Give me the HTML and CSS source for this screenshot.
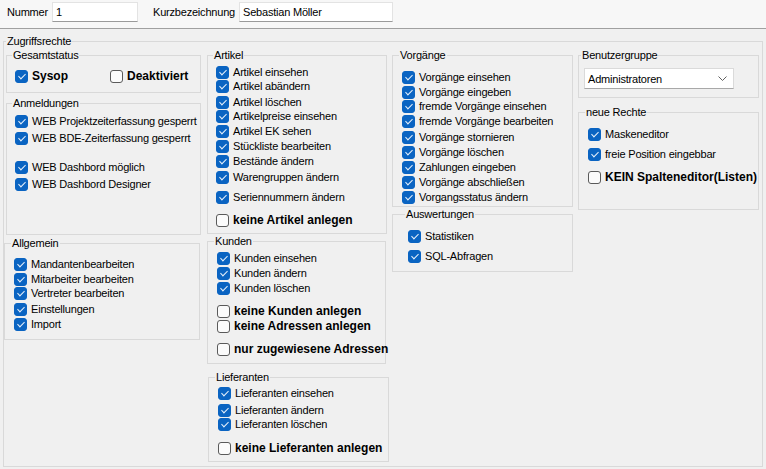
FILE: index.html
```html
<!DOCTYPE html>
<html lang="de">
<head>
<meta charset="utf-8">
<title>Zugriffsrechte</title>
<link rel="stylesheet" href="styles.css">
</head>
<body>
<div class="topbar">
  <span class="top-label num-label">Nummer</span>
  <div class="textbox num-box">1</div>
  <span class="top-label kurz-label">Kurzbezeichnung</span>
  <div class="textbox kurz-box">Sebastian Möller</div>
</div>

<div class="group outer">
  <div class="legend legend-outer">Zugriffsrechte</div>
  <div class="columns">

    <div class="col col1">
      <div class="group g-gesamt pad8">
        <div class="legend">Gesamtstatus</div>
        <div class="status-row mt7">
          <div class="item bold"><span class="cb on"></span>Sysop</div>
          <div class="item bold"><span class="cb"></span>Deaktiviert</div>
        </div>
      </div>
      <div class="group g-anm pad8">
        <div class="legend">Anmeldungen</div>
        <div class="item mt4"><span class="cb on"></span>WEB Projektzeiterfassung gesperrt</div>
        <div class="item mt3"><span class="cb on"></span>WEB BDE-Zeiterfassung gesperrt</div>
        <div class="item mt15"><span class="cb on"></span>WEB Dashbord möglich</div>
        <div class="item mt3"><span class="cb on"></span>WEB Dashbord Designer</div>
      </div>
      <div class="group g-allg">
        <div class="legend">Allgemein</div>
        <div class="item mt7"><span class="cb on"></span>Mandantenbearbeiten</div>
        <div class="item mt1"><span class="cb on"></span>Mitarbeiter bearbeiten</div>
        <div class="item"><span class="cb on"></span>Vertreter bearbeiten</div>
        <div class="item mt2"><span class="cb on"></span>Einstellungen</div>
        <div class="item mt1"><span class="cb on"></span>Import</div>
      </div>
    </div>

    <div class="col col2">
      <div class="group g-artikel pad8">
        <div class="legend">Artikel</div>
        <div class="item mt3"><span class="cb on"></span>Artikel einsehen</div>
        <div class="item"><span class="cb on"></span>Artikel abändern</div>
        <div class="item mt2"><span class="cb on"></span>Artikel löschen</div>
        <div class="item"><span class="cb on"></span>Artikelpreise einsehen</div>
        <div class="item mt1"><span class="cb on"></span>Artikel EK sehen</div>
        <div class="item mt1"><span class="cb on"></span>Stückliste bearbeiten</div>
        <div class="item mt1"><span class="cb on"></span>Bestände ändern</div>
        <div class="item mt2"><span class="cb on"></span>Warengruppen ändern</div>
        <div class="item mt6"><span class="cb on"></span>Seriennummern ändern</div>
        <div class="item bold mt9"><span class="cb"></span>keine Artikel anlegen</div>
      </div>
      <div class="group g-kunden">
        <div class="legend">Kunden</div>
        <div class="item mt3"><span class="cb on"></span>Kunden einsehen</div>
        <div class="item mt1"><span class="cb on"></span>Kunden ändern</div>
        <div class="item mt1"><span class="cb on"></span>Kunden löschen</div>
        <div class="item bold mt9"><span class="cb"></span>keine Kunden anlegen</div>
        <div class="item bold mt1"><span class="cb"></span>keine Adressen anlegen</div>
        <div class="item bold mt9"><span class="cb"></span>nur zugewiesene Adressen</div>
      </div>
      <div class="group g-lief">
        <div class="legend">Lieferanten</div>
        <div class="item mt2"><span class="cb on"></span>Lieferanten einsehen</div>
        <div class="item mt3"><span class="cb on"></span>Lieferanten ändern</div>
        <div class="item"><span class="cb on"></span>Lieferanten löschen</div>
        <div class="item bold mt10"><span class="cb"></span>keine Lieferanten anlegen</div>
      </div>
    </div>

    <div class="col col3">
      <div class="group g-vorg">
        <div class="legend">Vorgänge</div>
        <div class="item mt8"><span class="cb on"></span>Vorgänge einsehen</div>
        <div class="item mt1"><span class="cb on"></span>Vorgänge eingeben</div>
        <div class="item"><span class="cb on"></span>fremde Vorgänge einsehen</div>
        <div class="item mt1"><span class="cb on"></span>fremde Vorgänge bearbeiten</div>
        <div class="item mt2"><span class="cb on"></span>Vorgänge stornieren</div>
        <div class="item mt1"><span class="cb on"></span>Vorgänge löschen</div>
        <div class="item mt1"><span class="cb on"></span>Zahlungen eingeben</div>
        <div class="item mt1"><span class="cb on"></span>Vorgänge abschließen</div>
        <div class="item mt1"><span class="cb on"></span>Vorgangsstatus ändern</div>
      </div>
      <div class="group g-ausw pad15">
        <div class="legend">Auswertungen</div>
        <div class="item mt8"><span class="cb on"></span>Statistiken</div>
        <div class="item mt6"><span class="cb on"></span>SQL-Abfragen</div>
      </div>
    </div>

    <div class="col col4">
      <div class="group g-benutzer">
        <div class="legend">Benutzergruppe</div>
        <div class="combo">
          <span>Administratoren</span>
          <svg class="chevron" width="9" height="5" viewBox="0 0 9 5"><polyline points="0.5,0.5 4.5,4.5 8.5,0.5" fill="none" stroke="#606060" stroke-width="1"/></svg>
        </div>
      </div>
      <div class="group g-neu">
        <div class="legend">neue Rechte</div>
        <div class="item mt8"><span class="cb on"></span>Maskeneditor</div>
        <div class="item mt6"><span class="cb on"></span>freie Position eingebbar</div>
        <div class="item bold mt9"><span class="cb"></span>KEIN Spalteneditor(Listen)</div>
      </div>
    </div>

  </div>
</div>
</body>
</html>
```
FILE: styles.css
```css
html, body {
  margin: 0;
  padding: 0;
}
body {
  background: #f0f0f0;
  font-family: "Liberation Sans", Arial, sans-serif;
  font-size: 11px;
  letter-spacing: -0.2px;
  color: #000;
  width: 766px;
  height: 469px;
  overflow: hidden;
}

/* top bar */
.topbar {
  height: 29px;
  box-sizing: border-box;
  padding: 2px 0 0 7px;
  display: flex;
  align-items: flex-start;
  background: #f7f7f7;
  border-bottom: 1px solid #a0a0a0;
}
.top-label {
  line-height: 20px;
  height: 20px;
}
.num-label { width: 45px; }
.kurz-label { width: 86px; margin-left: 15px; }
.textbox {
  height: 20px;
  box-sizing: border-box;
  background: #fff;
  border: 1px solid #e3e3e3;
  border-bottom-color: #9a9a9a;
  padding-left: 3px;
  line-height: 18px;
}
.num-box { width: 86px; }
.kurz-box { width: 154px; }

/* group boxes */
.group {
  box-sizing: border-box;
  border: 1px solid #d9d9d9;
  padding-left: 9px;
}
.pad8 { padding-left: 8px; }
.pad15 { padding-left: 15px; }
.legend {
  display: block;
  width: max-content;
  line-height: 14px;
  height: 14px;
  margin: -8px 0 0 -3px;
  padding: 0 1px;
  background: #f0f0f0;
}
.outer {
  margin: 12px 0 0 3px;
  width: 760px;
  height: 426px;
  padding-left: 0;
}
.legend-outer {
  margin-left: 2px;
}
.columns {
  display: flex;
  align-items: flex-start;
  margin-top: 7px;
  padding-left: 2px;
}
.col {
  display: flex;
  flex-direction: column;
  flex: none;
}
.col1 { width: 195px; }
.col2 { width: 180px; margin-left: 6px; }
.col3 { width: 181px; margin-left: 5px; }
.col4 { width: 181px; margin-left: 5px; }

.g-gesamt { height: 38px; }
.g-anm { height: 132px; margin-top: 10px; }
.g-allg { height: 97px; margin-top: 8px; margin-left: -2px; width: 196px; }

.g-artikel { height: 179px; }
.g-kunden { height: 123px; margin-top: 7px; width: 179px; }
.g-lief { height: 85px; margin-top: 13px; margin-left: 1px; width: 181px; }

.g-vorg { height: 152px; }
.g-ausw { height: 58px; margin-top: 7px; }

.g-benutzer { height: 43px; padding-left: 5px; }
.g-neu { height: 98px; margin-top: 14px; }

/* items */
.item {
  display: flex;
  align-items: center;
  height: 14px;
  line-height: 14px;
  white-space: nowrap;
}
.bold {
  font-weight: bold;
  font-size: 12px;
  letter-spacing: 0;
}
.status-row {
  display: grid;
  grid-template-columns: 95px auto;
}
.cb {
  position: relative;
  flex: none;
  width: 13px;
  height: 13px;
  box-sizing: border-box;
  margin-right: 4px;
  border: 1px solid #5a5a5a;
  border-radius: 3px;
  background: #fbfbfb;
}
.cb.on {
  background: #0a64c2;
  border-color: #0a64c2;
}
.cb.on::after {
  content: "";
  position: absolute;
  left: 3.6px;
  top: 1.2px;
  width: 3px;
  height: 6px;
  border: solid #e8f1fb;
  border-width: 0 1.2px 1.2px 0;
  transform: rotate(45deg);
}

.mt1 { margin-top: 1px; }
.mt2 { margin-top: 2px; }
.mt3 { margin-top: 3px; }
.mt4 { margin-top: 4px; }
.mt6 { margin-top: 6px; }
.mt7 { margin-top: 7px; }
.mt8 { margin-top: 8px; }
.mt9 { margin-top: 9px; }
.mt10 { margin-top: 10px; }
.mt15 { margin-top: 15px; }

/* combo box */
.combo {
  margin-top: 6px;
  width: 150px;
  height: 21px;
  box-sizing: border-box;
  background: #fff;
  border: 1px solid #dadada;
  border-bottom-color: #a8a8a8;
  display: flex;
  align-items: center;
  justify-content: space-between;
  padding: 0 6px 0 3px;
}
.chevron {
  display: block;
}
```
